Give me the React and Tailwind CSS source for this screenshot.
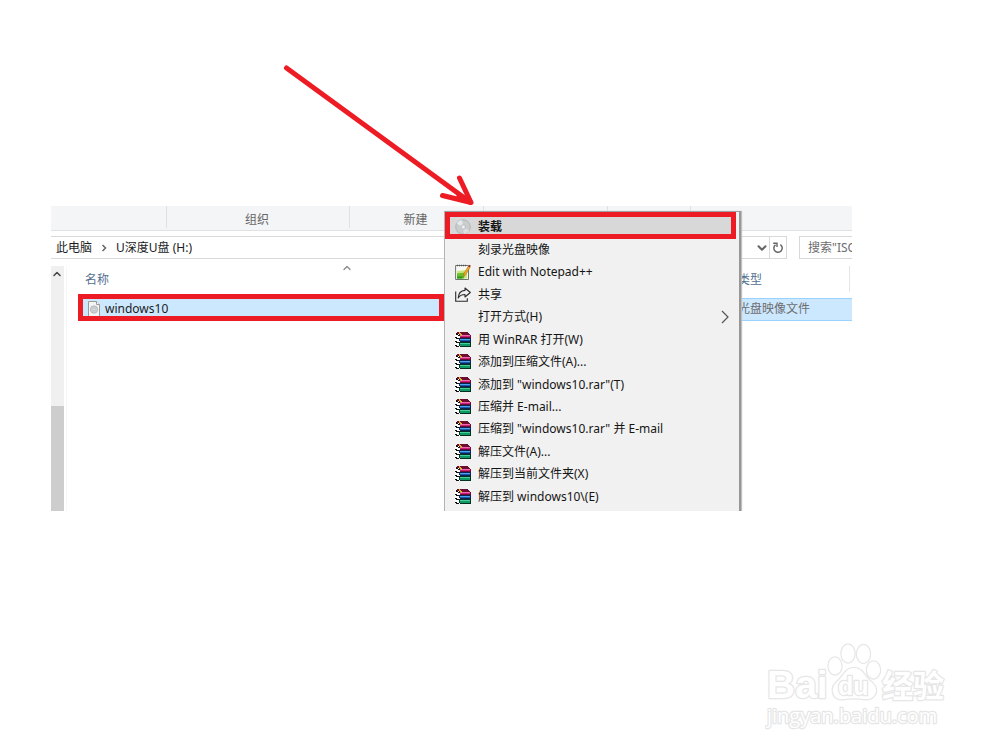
import { ChevronDown, ChevronUp } from "lucide-react";

const ribbonGroups = [
  { label: "", width: "w-[116px]" },
  { label: "组织", width: "w-[183px]" },
  { label: "新建", width: "w-[134px]" },
  { label: "", width: "w-[124px]" },
  { label: "", width: "w-[83px]" },
];

const menuItems = [
  { label: "装载", icon: "disc", active: true },
  { label: "刻录光盘映像" },
  { label: "Edit with Notepad++", icon: "notepad" },
  { label: "共享", icon: "share" },
  { label: "打开方式(H)", submenu: true },
  { label: "用 WinRAR 打开(W)", icon: "rar" },
  { label: "添加到压缩文件(A)...", icon: "rar" },
  { label: '添加到 "windows10.rar"(T)', icon: "rar" },
  { label: "压缩并 E-mail...", icon: "rar" },
  { label: '压缩到 "windows10.rar" 并 E-mail', icon: "rar" },
  { label: "解压文件(A)...", icon: "rar" },
  { label: "解压到当前文件夹(X)", icon: "rar" },
  { label: "解压到 windows10\\(E)", icon: "rar" },
];

function DiscIcon() {
  return (
    <svg viewBox="0 0 16 16" className="size-4">
      <circle cx="8" cy="8" r="7.3" fill="#c9cdce" stroke="#a9adae" strokeWidth="0.8" />
      <path d="M8 8 1.6 4.5A7 7 0 0 1 7 1Z" fill="#e6e9ea" />
      <path d="M8 8 14.4 11.5A7 7 0 0 1 9 15Z" fill="#dcdfe0" />
      <circle cx="8.3" cy="8" r="2.4" fill="#dadedf" stroke="#b6babc" strokeWidth="0.7" />
      <circle cx="8.3" cy="8" r="1" fill="#f3f3f3" />
    </svg>
  );
}

function NotepadIcon() {
  return (
    <svg viewBox="0 0 16 16" className="size-4">
      <path d="M.6 1.5h12.9v14H.6z" fill="#f7f9f2" stroke="#6e7670" />
      <path d="M2 7 12 6v8.5H2z" fill="#c9e67c" />
      <path d="M2 9.5 10 8.5l-1 6H2z" fill="#69bd28" />
      <path d="M2 12.5h6l-1 2H2z" fill="#2f9722" />
      <path d="M2 1.5h9" stroke="#4c5352" strokeWidth="1.6" strokeDasharray="1 1" />
      <path d="M13.3 2.2 9 9.5l-.5 3 2.4-2L15 3.4z" fill="#f2a91c" stroke="#a36310" strokeWidth="0.5" />
      <path d="m13.2 2.3 1-1.6 1.6 1-.9 1.7z" fill="#a3262c" />
    </svg>
  );
}

function ShareIcon() {
  return (
    <svg viewBox="0 0 16 16" className="size-4" fill="none" stroke="#2b2b2b" strokeWidth="1.1">
      <path d="M.7 4.5v9.8h11.6v-3" />
      <path d="M10 1 15.3 5.5 10 10V7.5C6.8 7.5 4.7 8.5 3.2 11 3.4 6.8 5.5 3.7 10 3.4z" strokeLinejoin="round" />
    </svg>
  );
}

function RarIcon() {
  return (
    <svg viewBox="0 0 16 16" className="size-4" shapeRendering="crispEdges">
      {/* pages */}
      <path d="M1 1 5 3v12L0 13V2z" fill="#fff" />
      <path d="M1 1h1v1h1v1h2v1H3V3H1zM0 5h2v1h2v1H1V6H0zM0 9h2v1h2v1H1v-1H0zM0 13h2v1h2v1H1v-1H0z" fill="#111" />
      {/* top book */}
      <path d="M2 0h10l4 3v3H5V3H4V2H2z" fill="#6e0d30" />
      <path d="M5 3h10v1H5z" fill="#f06aa9" />
      <path d="M5 4h10v1H5z" fill="#cf1c80" />
      <path d="M4 0h1v1h1v1h1v2H6V3H5V2H4z" fill="#e3b52e" />
      {/* middle book */}
      <path d="M4 6h12v4H5V9H4z" fill="#0c2357" />
      <path d="M5 7h10v1H5z" fill="#4fa3e6" />
      <path d="M5 8h10v1H5z" fill="#155cb0" />
      {/* bottom book */}
      <path d="M4 10h12v5H5v-1H4z" fill="#043024" />
      <path d="M5 11h10v1H5z" fill="#46cf9a" />
      <path d="M5 12h10v2H5z" fill="#0e9a62" />
    </svg>
  );
}

function RefreshIcon() {
  return (
    <svg viewBox="0 0 12 12" className="size-3" fill="none" stroke="#666" strokeWidth="1.5">
      <path d="M8.3 2.6a4.2 4.2 0 1 1-4.8.2" />
      <path d="M1.2 1.3h3.8v3.6" strokeWidth="1.4" />
    </svg>
  );
}

const icons = { disc: DiscIcon, notepad: NotepadIcon, share: ShareIcon, rar: RarIcon };

function FileIcon() {
  return (
    <svg viewBox="0 0 12 16" className="h-4 w-3 shrink-0">
      <path d="M.5.5h8l3 3v12H.5z" fill="#f4f4f4" stroke="#9a9a9a" />
      <path d="M8.5.5v3h3" fill="#fff" stroke="#9a9a9a" />
      <circle cx="6" cy="8.5" r="3.7" fill="#cdd0d2" stroke="#a9adaf" strokeWidth="0.7" />
      <circle cx="6" cy="8.5" r="1.1" fill="#f2f2f2" stroke="#a9adaf" strokeWidth="0.5" />
    </svg>
  );
}

function ContextMenu() {
  return (
    <div
      role="menu"
      className="absolute top-[5px] bottom-0 left-[393px] flex w-[297px] flex-col border-t border-r-2 border-l border-t-[#a0a0a0] border-r-[#979797] border-l-[#b4b4b4] bg-[#f1f1f1] pt-1 pb-[3px] shadow-[1px_0_1px_#c0c0c0]"
    >
      {menuItems.map((item) => {
        const Icon = icons[item.icon];
        return (
          <button
            key={item.label}
            role="menuitem"
            className={`flex min-h-0 flex-1 items-center gap-[7px] pr-2.5 pl-2.5 text-left text-[#151515] ${
              item.active ? "mr-1 bg-[#d8d8d8] font-bold" : ""
            }`}
          >
            <span className="size-4 shrink-0">{Icon && <Icon />}</span>
            <span className="flex-1 whitespace-nowrap">{item.label}</span>
            {item.submenu && (
              <svg viewBox="0 0 8 14" className="h-3.5 w-2" fill="none" stroke="#555" strokeWidth="1.2">
                <path d="m1 1 6 6-6 6" />
              </svg>
            )}
          </button>
        );
      })}
      <div className="pointer-events-none absolute top-0 right-[3px] left-0 h-[27px] border-[5px] border-[#ed1c24]" />
    </div>
  );
}

function Explorer() {
  return (
    <section className="relative mr-[148px] ml-[51px] h-[305px] overflow-hidden text-xs">
      {/* ribbon group captions */}
      <div className="flex h-[25px] border-b border-[#dfe1e3] bg-[#f4f5f7] text-[#666]">
        {ribbonGroups.map((group, i) => (
          <div
            key={i}
            className={`mb-0.5 flex shrink-0 items-center justify-center border-r border-[#dfe1e4] pt-1.5 pr-0.5 ${group.width}`}
          >
            {group.label}
          </div>
        ))}
      </div>

      {/* address bar */}
      <div className="mt-[5px] flex h-[23px] gap-3">
        <nav className="flex min-w-0 flex-1 items-center border border-l-0 border-[#d9d9d9] pl-[5px] text-[#1c1c1c]">
          <a href="#pc">此电脑</a>
          <svg viewBox="0 0 12 12" className="mx-1.5 size-3" fill="none" stroke="#666" strokeWidth="1.5">
            <path d="m4.5 3 3 3-3 3" />
          </svg>
          <a href="#drive" className="flex-1">
            U深度U盘 (H:)
          </a>
          <button aria-label="历史记录" className="text-[#666]">
            <ChevronDown className="size-3.5" strokeWidth={3.5} />
          </button>
          <button
            aria-label="刷新"
            className="flex h-full w-[17px] items-center justify-center border-l border-[#d9d9d9]"
          >
            <RefreshIcon />
          </button>
        </nav>
        <input
          type="text"
          aria-label="搜索"
          placeholder={'搜索"ISO"'}
          className="w-[53px] border border-r-0 border-[#d9d9d9] pl-2 placeholder:text-[#6d6d6d]"
        />
      </div>

      <div className="mt-[7px] flex h-[245px]">
        {/* scroll bar */}
        <div className="flex w-[13px] shrink-0 flex-col justify-between bg-[#f0f0f0]">
          <ChevronUp className="mt-0.5 size-3 text-[#444]" strokeWidth={3} />
          <div className="h-[105px] bg-[#cdcdcd]" />
        </div>
        <div className="relative ml-0.5 flex-1 border-l border-[#f7f7f7] pl-[11px]">
          <table className="w-full table-fixed border-collapse">
            <colgroup>
              <col className="w-[538px]" />
              <col className="w-[115px]" />
              <col />
            </colgroup>
            <thead>
              <tr className="h-8 text-left text-[#56708f]">
                <th className="relative pb-1 pl-[7px] font-normal">
                  名称
                  <ChevronUp
                    className="absolute -top-1 left-1/2 size-3 -translate-x-1/2 text-[#888]"
                    strokeWidth={2.5}
                  />
                </th>
                <th />
                <th className="pb-1 pl-[7px] font-normal">类型</th>
              </tr>
            </thead>
            <tbody>
              <tr className="h-[22px] border-y border-[#99d1ff] bg-[#cce8ff]">
                <td className="p-0">
                  <div className="flex items-center gap-[5px] pl-2.5 text-[#1c1c1c]">
                    <FileIcon />
                    windows10
                  </div>
                </td>
                <td />
                <td className="p-0 pl-[7px] whitespace-nowrap text-[#6d6d6d]">光盘映像文件</td>
              </tr>
            </tbody>
          </table>
          <div className="pointer-events-none absolute top-7 left-[11px] h-[27px] w-[366px] border-[5px] border-[#ed1c24]" />
          <div className="absolute top-0 right-0.5 h-[26px] w-px bg-[#e5e5e5]" />
        </div>
      </div>

      <ContextMenu />
    </section>
  );
}

function Arrow() {
  return (
    <svg
      viewBox="280 60 200 150"
      className="pointer-events-none absolute top-[60px] left-[280px] h-[150px] w-[200px]"
      fill="none"
      stroke="#ed1c24"
      strokeWidth="5"
      strokeLinecap="round"
      strokeLinejoin="round"
    >
      <path d="M286.5 68 470 202" />
      <path d="M459.5 178 471 202.5 442.5 195.5" />
      <path d="m459 196 11 6" />
    </svg>
  );
}

function Watermark() {
  return (
    <svg
      viewBox="0 0 184 90"
      className="h-[90px] w-[184px]"
      fill="#fff"
      stroke="#e6e6e6"
      strokeWidth="2.5"
      strokeLinejoin="round"
      paintOrder="stroke"
    >
      <text x="2" y="57" fontSize="39" fontWeight="700" fontFamily="'Liberation Sans', sans-serif">
        Bai
      </text>
      <ellipse cx="70" cy="25" rx="6.5" ry="8.5" />
      <ellipse cx="83" cy="12.5" rx="6.5" ry="9" />
      <ellipse cx="98.5" cy="13" rx="6.5" ry="9" />
      <ellipse cx="108.5" cy="29" rx="6.5" ry="8.5" />
      <path d="M89 27c-8 0-10 7-15 12-5 4-7 8-6 12 1 6 6 8 11 7 7-1 13-1 20 0 6 1 11-2 12-8 0-5-3-8-7-11-5-5-7-12-15-12z" />
      <text x="73" y="54" fontSize="25" fontWeight="700" fontFamily="'Liberation Sans', sans-serif">
        du
      </text>
      <text x="117" y="56" fontSize="31" fontWeight="700" fontFamily="'Noto Sans CJK SC', sans-serif">
        经验
      </text>
      <text x="2" y="82" fontSize="20" fontFamily="'Open Sans', 'Noto Sans', sans-serif">
        jingyan.baidu.com
      </text>
    </svg>
  );
}

export default function App() {
  return (
    <main className="relative min-h-screen bg-white pt-[206px] font-['Noto_Sans','Noto_Sans_CJK_SC',sans-serif]">
      <Explorer />
      <Arrow />
      <footer className="mt-[130px] flex justify-end pr-[51px]">
        <Watermark />
      </footer>
    </main>
  );
}
